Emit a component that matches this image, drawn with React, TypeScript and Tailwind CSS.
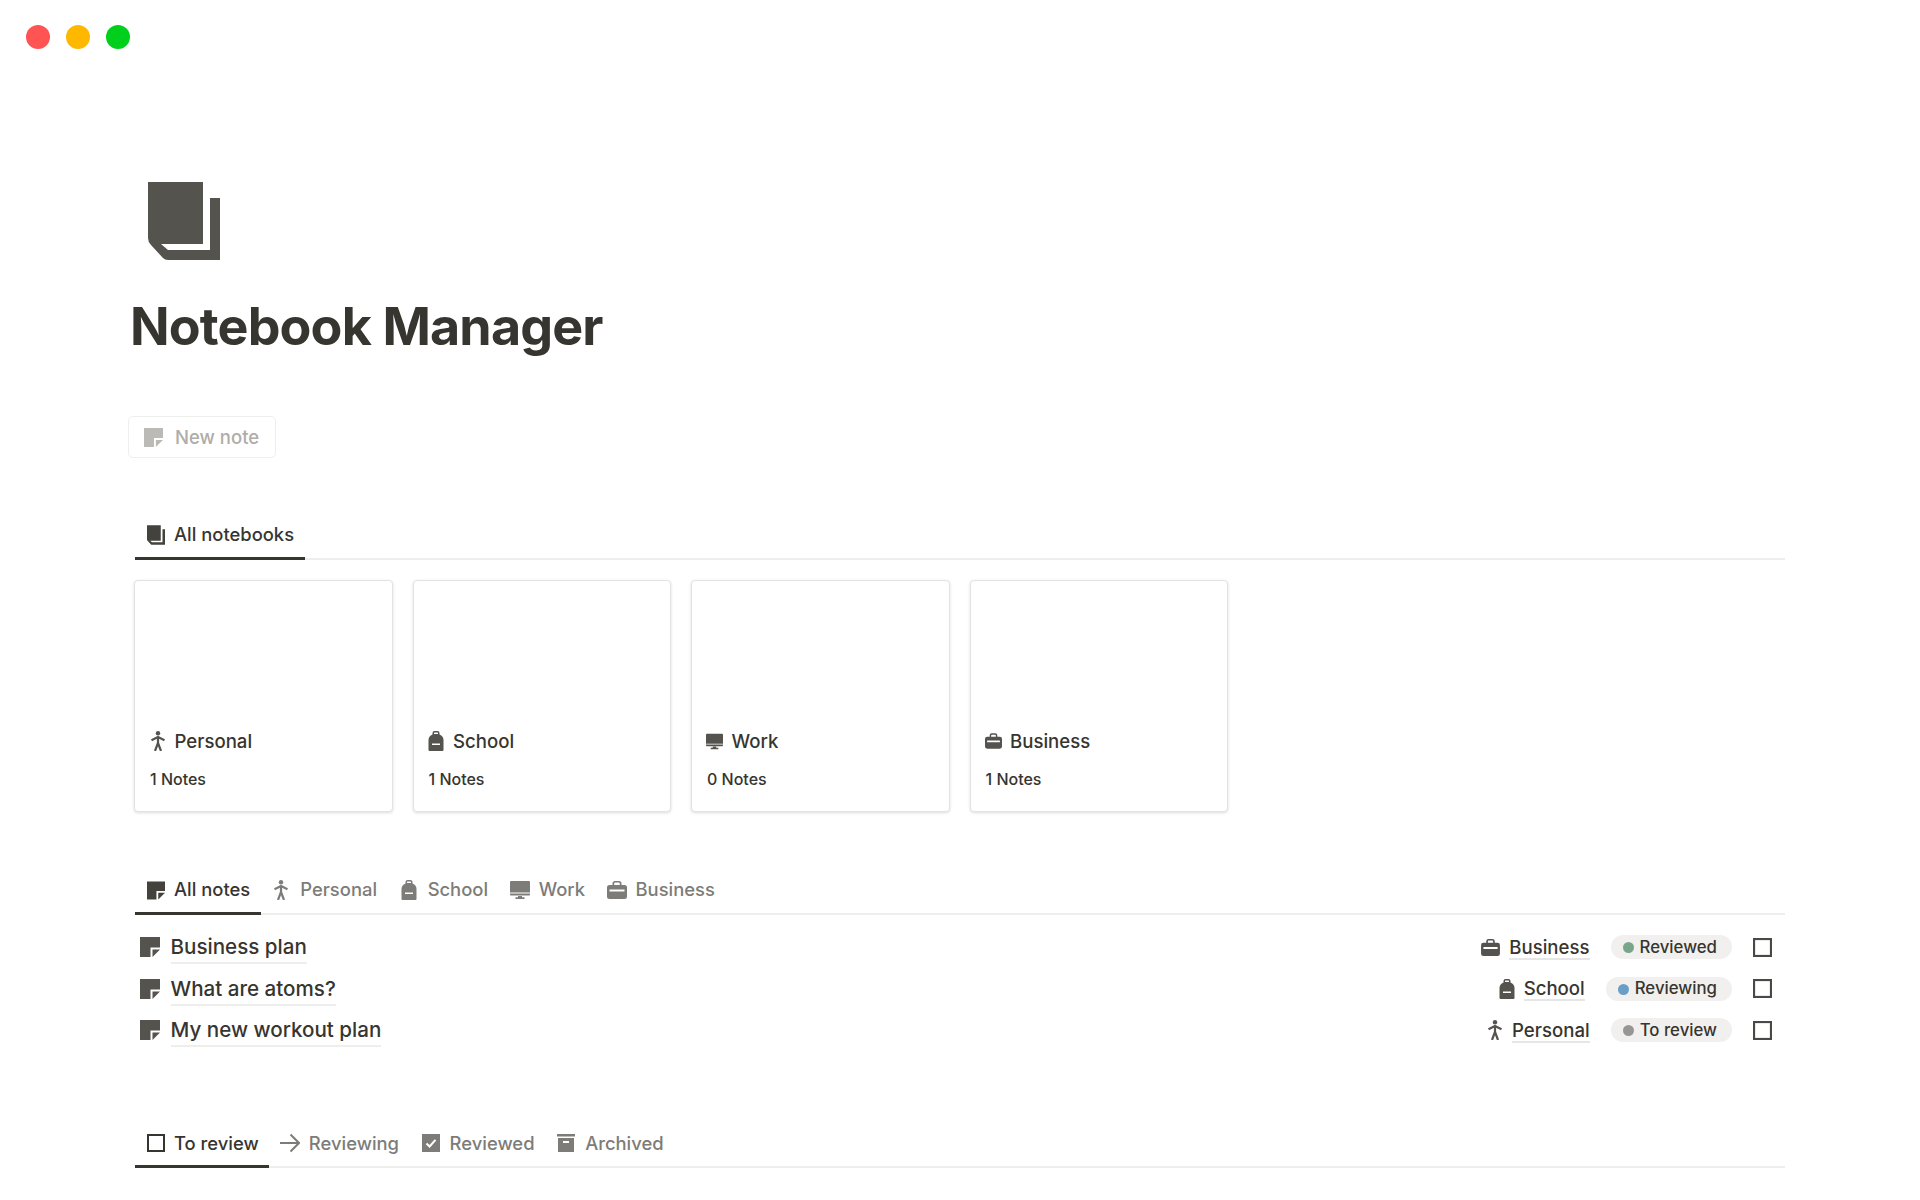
import type { ReactNode } from "react";

type IconProps = { className?: string };

function NoteIcon({ className }: IconProps) {
  return (
    <svg viewBox="0 0 20 20" className={className} fill="currentColor">
      <path d="M0 0H20V10.5H10.5V20H0Z" />
      <path d="M12.5 12.5H20L12.5 20Z" />
    </svg>
  );
}

function BookIcon({ className }: IconProps) {
  return (
    <svg viewBox="0 0 72 78" className={className} fill="currentColor">
      <path d="M0 0H55V62H13L20 68H62V16H72V78H20Q17 78 15 76L3 63Q0 60 0 56Z" />
    </svg>
  );
}

function PersonIcon({ className }: IconProps) {
  return (
    <svg viewBox="0 0 16 20" className={className} fill="none" stroke="currentColor" strokeWidth="2.2">
      <circle cx="8" cy="2.2" r="2.2" fill="currentColor" stroke="none" />
      <path d="M1.5 9.2L8 6L14.5 9.2" />
      <path d="M8 6V12L5 20M8 12L11 20" />
    </svg>
  );
}

function BackpackIcon({ className }: IconProps) {
  return (
    <svg viewBox="0 0 16 20" className={className} fill="currentColor">
      <path
        fillRule="evenodd"
        d="M4.5 2Q4.5 0 6.5 0H9.5Q11.5 0 11.5 2V3.5Q15.5 5 15.5 9V19Q15.5 20 14.5 20H1.5Q.5 20 .5 19V9Q.5 5 4.5 3.5ZM6 2V3H10V2Q10 1.4 9.4 1.4H6.6Q6 1.4 6 2ZM4 12.5V14H12V12.5Z"
      />
    </svg>
  );
}

function MonitorIcon({ className }: IconProps) {
  return (
    <svg viewBox="0 0 20 18" className={className} fill="currentColor">
      <path d="M1 0H19Q20 0 20 1V11.5H0V1Q0 0 1 0Z" />
      <path d="M0 12.5H20V13.5Q20 14.5 19 14.5H1Q0 14.5 0 13.5Z" />
      <path d="M8 15H12V16.3H14.5V18H5.5V16.3H8Z" />
    </svg>
  );
}

function BriefcaseIcon({ className }: IconProps) {
  return (
    <svg viewBox="0 0 20 18" className={className} fill="currentColor">
      <path
        fillRule="evenodd"
        d="M5.5 4V2.5Q5.5 0 8 0H12Q14.5 0 14.5 2.5V4H17.5Q20 4 20 6.5V15.5Q20 18 17.5 18H2.5Q0 18 0 15.5V6.5Q0 4 2.5 4ZM7.2 4H12.8V2.6Q12.8 1.6 11.8 1.6H8.2Q7.2 1.6 7.2 2.6ZM2.5 8.5V10.5H17.5V8.5Z"
      />
    </svg>
  );
}

function BoxIcon({ className }: IconProps) {
  return (
    <svg viewBox="0 0 18 18" className={className} fill="none" stroke="currentColor" strokeWidth="2">
      <rect x="1" y="1" width="16" height="16" />
    </svg>
  );
}

function ArrowIcon({ className }: IconProps) {
  return (
    <svg viewBox="0 0 20 20" className={className} fill="none" stroke="currentColor" strokeWidth="2">
      <path d="M0 10H18.5M10.5 1.5L19 10L10.5 18.5" />
    </svg>
  );
}

function CheckedIcon({ className }: IconProps) {
  return (
    <svg viewBox="0 0 18 18" className={className}>
      <rect width="18" height="18" fill="currentColor" />
      <path d="M4.5 9.5L7.6 12.5L13.5 5.8" fill="none" stroke="#fff" strokeWidth="2" />
    </svg>
  );
}

function ArchiveIcon({ className }: IconProps) {
  return (
    <svg viewBox="0 0 18 18" className={className} fill="currentColor">
      <path d="M0 0H18V2.5H0Z" />
      <path fillRule="evenodd" d="M1 4H17V18H1ZM6 7V9H12V7Z" />
    </svg>
  );
}

type TabItem = { label: string; icon: ReactNode };

function Tabs({ items }: { items: TabItem[] }) {
  return (
    <div className="ml-px flex h-[44px] border-b-2 border-[#eeeeec]">
      {items.map((tab, i) => (
        <div
          key={tab.label}
          className={
            i === 0
              ? "flex h-[44px] items-center gap-2 border-b-[3px] border-[#37352f] pb-[3px] pl-[11px] pr-[10.5px] text-[18.4px] text-[#37352f]"
              : "flex h-[44px] items-center gap-[9px] pb-[6px] pl-[10.6px] pr-[11px] text-[18.4px] text-[#7d7c78]"
          }
        >
          <span className="flex w-5 justify-center">{tab.icon}</span>
          {tab.label}
        </div>
      ))}
    </div>
  );
}

function NotebookCard({ icon, name, count }: { icon: ReactNode; name: string; count: string }) {
  return (
    <div className="flex h-[232px] w-[258.5px] flex-col justify-end rounded-[4px] border border-[#e3e3e1] bg-white px-[14px] pb-[22px] shadow-[0_1px_3px_rgba(15,15,15,0.14)]">
      <div className="flex items-center gap-[8.5px] text-[18.6px] leading-6 text-[#37352f]">
        <span className="flex w-[17px] justify-center text-[#55534e]">{icon}</span>
        {name}
      </div>
      <div className="ml-px mt-[16px] text-[16px] leading-5 text-[#37352f]">{count}</div>
    </div>
  );
}

type Note = {
  title: string;
  notebook: string;
  notebookIcon: ReactNode;
  status: string;
  dot: string;
};

function NoteRow({ note }: { note: Note }) {
  return (
    <div className="flex h-[41.5px] items-center pl-[6px] pr-[13px]">
      <NoteIcon className="h-5 w-5 text-[#55534e]" />
      <span className="ml-[10.5px] border-b-2 border-[#eeeeec] pt-[2px] text-[20.6px] leading-[30px] text-[#37352f]">{note.title}</span>
      <div className="ml-auto flex items-center gap-[9px] text-[#55534e]">
        {note.notebookIcon}
        <span className="border-b-2 border-[#e6e6e4] pt-[2px] text-[18.6px] leading-[21px] text-[#37352f]">{note.notebook}</span>
      </div>
      <div className="ml-[21px] flex h-6 w-fit items-center gap-[6px] rounded-full bg-[#f1f0ee] pl-3 pr-[15px] pt-px text-[16.8px] text-[#37352f]">
        <span className={note.dot} />
        {note.status}
      </div>
      <BoxIcon className="ml-[21px] h-[19px] w-[19px] text-[#4a4945]" />
    </div>
  );
}

const notes: Note[] = [
  {
    title: "Business plan",
    notebook: "Business",
    notebookIcon: <BriefcaseIcon className="h-[17px] w-[19px]" />,
    status: "Reviewed",
    dot: "h-[11px] w-[11px] shrink-0 rounded-full bg-[#7aa58a]",
  },
  {
    title: "What are atoms?",
    notebook: "School",
    notebookIcon: <BackpackIcon className="h-5 w-4" />,
    status: "Reviewing",
    dot: "h-[11px] w-[11px] shrink-0 rounded-full bg-[#679fc9]",
  },
  {
    title: "My new workout plan",
    notebook: "Personal",
    notebookIcon: <PersonIcon className="h-5 w-4" />,
    status: "To review",
    dot: "h-[11px] w-[11px] shrink-0 rounded-full bg-[#979694]",
  },
];

export default function App() {
  return (
    <div className="min-h-screen bg-white font-['Inter',sans-serif] font-[450] text-[#37352f]">
      <div className="flex gap-4 pl-[26px] pt-[25px]">
        <span className="h-6 w-6 rounded-full bg-[#ff5354]" />
        <span className="h-6 w-6 rounded-full bg-[#ffb800]" />
        <span className="h-6 w-6 rounded-full bg-[#00d01b]" />
      </div>

      <main className="pl-[134px] pr-[135px]">
        <BookIcon className="ml-[14px] mt-[133px] h-[78px] w-[72px] text-[#55534e]" />
        <h1 className="-ml-[4px] mt-[32px] text-[52px] font-bold leading-[70px] tracking-[-0.85px]">Notebook Manager</h1>

        <div className="-ml-[6px] mt-[54px] flex h-[42px] w-[148px] items-center gap-3 rounded-[5px] border border-[#eeeeec] pl-[15px] pt-px text-[18.5px] text-[#aeada9]">
          <NoteIcon className="h-[19px] w-[19px] text-[#bbbab7]" />
          New note
        </div>

        <div className="mt-[58px]">
          <Tabs items={[{ label: "All notebooks", icon: <BookIcon className="h-5 w-[18px] text-[#44423d]" /> }]} />
        </div>

        <div className="mt-[20px] flex gap-[20px]">
          <NotebookCard icon={<PersonIcon className="h-5 w-4" />} name="Personal" count="1 Notes" />
          <NotebookCard icon={<BackpackIcon className="h-5 w-4" />} name="School" count="1 Notes" />
          <NotebookCard icon={<MonitorIcon className="h-[17px] w-[19px]" />} name="Work" count="0 Notes" />
          <NotebookCard icon={<BriefcaseIcon className="h-[16px] w-[18px]" />} name="Business" count="1 Notes" />
        </div>

        <div className="mt-[59px]">
          <Tabs
            items={[
              { label: "All notes", icon: <NoteIcon className="h-[19px] w-[18px] text-[#44423d]" /> },
              { label: "Personal", icon: <PersonIcon className="h-5 w-4" /> },
              { label: "School", icon: <BackpackIcon className="h-5 w-4" /> },
              { label: "Work", icon: <MonitorIcon className="h-[18px] w-5" /> },
              { label: "Business", icon: <BriefcaseIcon className="h-[18px] w-5" /> },
            ]}
          />
        </div>

        <div className="mt-[11.3px]">
          {notes.map((note) => (
            <NoteRow key={note.title} note={note} />
          ))}
        </div>

        <div className="mt-[73.7px]">
          <Tabs
            items={[
              { label: "To review", icon: <BoxIcon className="h-[18px] w-[18px] text-[#37352f]" /> },
              { label: "Reviewing", icon: <ArrowIcon className="h-5 w-5" /> },
              { label: "Reviewed", icon: <CheckedIcon className="h-[18px] w-[18px]" /> },
              { label: "Archived", icon: <ArchiveIcon className="h-[18px] w-[18px]" /> },
            ]}
          />
        </div>
      </main>
    </div>
  );
}
